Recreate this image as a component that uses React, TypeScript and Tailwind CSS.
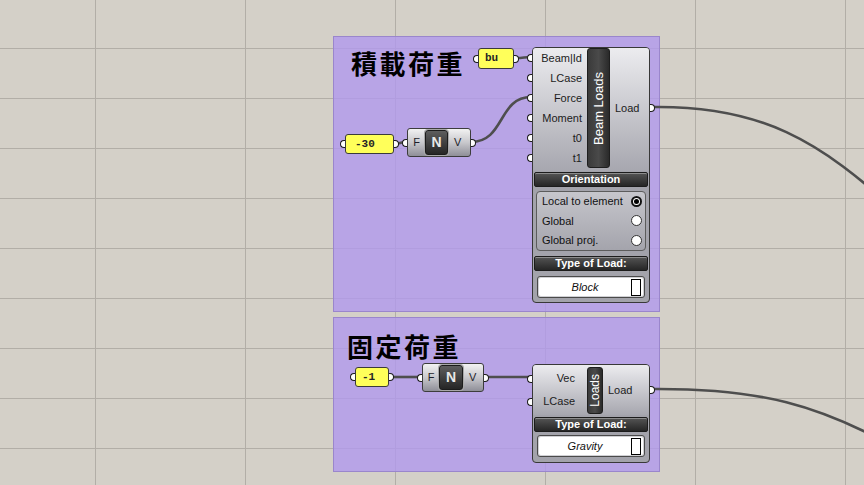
import React from 'react';

const vLines = [95, 245, 395, 545, 695, 845];
const hLines = [48, 98, 148, 198, 248, 298, 348, 398, 448];

function InPort() {
  return (
    <span className="absolute -left-[6px] top-1/2 -translate-y-1/2 w-[5px] h-[8px] rounded-l-full border border-r-0 border-[#1a1a1a] bg-white" />
  );
}

function OutPort() {
  return (
    <span className="absolute -right-[6px] top-1/2 -translate-y-1/2 w-[5px] h-[8px] rounded-r-full border border-l-0 border-[#1a1a1a] bg-white" />
  );
}

function Panel({ text, className }: { text: string; className: string }) {
  return (
    <div
      className={`absolute h-[20px] rounded-[3px] border border-[#3a3a3a] bg-[#ffff5a] flex items-center font-['Liberation_Mono',monospace] font-bold text-[11px] text-[#262626] ${className}`}
    >
      <InPort />
      {text}
      <OutPort />
    </div>
  );
}

function UnitZ({ className, leftW, btnW }: { className: string; leftW: string; btnW: string }) {
  return (
    <div
      className={`absolute h-[29px] rounded-[3px] border border-[#3c3c3c] bg-linear-to-b from-[#f2f2f2] via-[#c8c8cc] to-[#8f8f98] flex items-center text-[11px] text-[#1e1e2a] ${className}`}
    >
      <InPort />
      <span className={`${leftW} text-center`}>F</span>
      <span
        className={`${btnW} h-[25px] rounded-[3px] border border-[#1c1c1c] bg-linear-to-b from-[#5e5e5e] to-[#262626] shadow-[0_0_0_1px_#a8a8a8] flex items-center justify-center text-[#e8e8e8] font-bold text-[14px]`}
      >
        N
      </span>
      <span className="pl-[6px]">V</span>
      <OutPort />
    </div>
  );
}

function Header({ children }: { children: React.ReactNode }) {
  return (
    <div className="h-[15px] rounded-[2px] border border-[#1c1c1c] bg-linear-to-b from-[#555] to-[#262626] shadow-[inset_0_1px_0_#8c8c8c] text-white font-bold text-[11px] leading-[13px] text-center">
      {children}
    </div>
  );
}

function Dropdown({ value }: { value: string }) {
  return (
    <div className="mx-[3px] h-[22px] rounded-[3px] border border-[#4a4a4a] bg-[#d0d0d4] p-[1px] flex">
      <div className="flex-1 rounded-[2px] bg-white flex items-center">
        <span className="flex-1 text-center italic text-[11px] text-[#111]">{value}</span>
        <span className="w-[10px] h-[17px] border border-black bg-white mr-[2px]" />
      </div>
    </div>
  );
}

function Radio({ on }: { on?: boolean }) {
  return (
    <span
      className={`w-[11px] h-[11px] rounded-full bg-white border ${on ? 'border-[2px] border-[#111]' : 'border-[#333]'} flex items-center justify-center`}
    >
      {on && <span className="w-[5px] h-[5px] rounded-full bg-black" />}
    </span>
  );
}

function InputRow({ label, h }: { label: string; h: string }) {
  return (
    <div className={`relative ${h} flex items-center justify-end`}>
      <InPort />
      {label}
    </div>
  );
}

function Group({ className, title, titleClass }: { className: string; title: string; titleClass: string }) {
  return (
    <div className={`absolute border border-[#9a86cc] bg-[#b098eecc] ${className}`}>
      <div
        className={`font-['Noto_Sans_CJK_JP','Noto_Sans_CJK_SC',sans-serif] font-bold text-[26px] leading-none tracking-[2.5px] text-black ${titleClass}`}
      >
        {title}
      </div>
    </div>
  );
}

export default function App() {
  return (
    <div className="relative w-[864px] h-[485px] overflow-hidden bg-[#d4d0c8] font-['Liberation_Sans',Arial,sans-serif] text-[#1c1c1c]">
      <svg className="absolute inset-0" width={864} height={485}>
        {vLines.map((x) => (
          <line key={`v${x}`} x1={x + 0.5} y1={0} x2={x + 0.5} y2={485} stroke="#b2aea7" strokeWidth={1} />
        ))}
        {hLines.map((y) => (
          <line key={`h${y}`} x1={0} y1={y + 0.5} x2={864} y2={y + 0.5} stroke="#b2aea7" strokeWidth={1} />
        ))}
      </svg>

      <Group className="left-[333px] top-[36px] w-[327px] h-[276px]" title="積載荷重" titleClass="pl-[17px] pt-[13px]" />
      <Group className="left-[333px] top-[317px] w-[327px] h-[155px]" title="固定荷重" titleClass="pl-[13px] pt-[15px]" />

      <svg className="absolute inset-0" width={864} height={485} fill="none" stroke="#4e4e4e" strokeWidth={2.6}>
        <path d="M516 58 C524 58 524 57 531 57" />
        <path d="M394 144 C400 144 400 142 406 142" />
        <path d="M471 142 C505 142 498 97 531 97" />
        <path d="M389 377 L421 377" />
        <path d="M484 377 L531 377" />
        <path d="M651 107 C760 105 820 140 900 215" />
        <path d="M651 389 C760 388 820 405 900 450" />
      </svg>

      <Panel text="bu" className="left-[478px] top-[48px] w-[36px] h-[21px] pl-[6px]" />
      <Panel text="-30" className="left-[345px] top-[134px] w-[49px] pl-[9px]" />
      <UnitZ className="left-[407px] top-[128px] w-[64px]" leftW="w-[17px]" btnW="w-[23px]" />

      {/* Beam Loads */}
      <div className="absolute left-[532px] top-[47px] w-[118px] h-[256px] rounded-[4px] border border-[#383838] bg-[#a3a3ab] flex flex-col text-[11px]">
        <div className="h-[123px] rounded-t-[3px] bg-linear-to-b from-[#ececef] to-[#a7a7af] flex">
          <div className="w-[49px] flex flex-col">
            {['Beam|Id', 'LCase', 'Force', 'Moment', 't0', 't1'].map((l) => (
              <InputRow key={l} label={l} h="h-[20px]" />
            ))}
          </div>
          <div className="ml-[5px] w-[23px] h-[120px] rounded-[3px] border border-[#1e1e1e] bg-linear-to-r from-[#3a3a3a] via-[#4a4a4a] to-[#2a2a2a] flex items-center justify-center">
            <span className="[writing-mode:vertical-rl] rotate-180 text-white text-[13px] leading-none">Beam Loads</span>
          </div>
          <div className="relative flex-1 h-[120px] flex items-center pl-[5px]">
            Load
            <OutPort />
          </div>
        </div>
        <div className="px-[1px] pt-[1px] flex flex-col">
          <Header>Orientation</Header>
          <div className="mx-[2px] mt-[4px] h-[60px] rounded-[4px] border border-[#5c5c5c] bg-linear-to-b from-[#c6c6cc] to-[#a4a4ac] flex flex-col justify-center pl-[5px] pr-[3px] text-[#111]">
            {[
              ['Local to element', true],
              ['Global', false],
              ['Global proj.', false],
            ].map(([l, on]) => (
              <div key={l as string} className="h-[19.5px] flex items-center justify-between">
                <span>{l as string}</span>
                <Radio on={on as boolean} />
              </div>
            ))}
          </div>
          <div className="mt-[5px]">
            <Header>Type of Load:</Header>
          </div>
          <div className="mt-[5px]">
            <Dropdown value="Block" />
          </div>
        </div>
      </div>

      <Panel text="-1" className="left-[355px] top-[367px] w-[34px] pl-[6px]" />
      <UnitZ className="left-[422px] top-[363px] w-[62px]" leftW="w-[16px]" btnW="w-[24px]" />

      {/* Loads */}
      <div className="absolute left-[532px] top-[364px] w-[118px] h-[99px] rounded-[4px] border border-[#383838] bg-[#a3a3ab] flex flex-col text-[11px]">
        <div className="h-[50px] rounded-t-[3px] bg-linear-to-b from-[#ececef] to-[#a7a7af] flex pt-[2px]">
          <div className="w-[42px] flex flex-col">
            <InputRow label="Vec" h="h-[23px]" />
            <InputRow label="LCase" h="h-[23px]" />
          </div>
          <div className="ml-[12px] w-[16px] h-[47px] rounded-[3px] border border-[#1e1e1e] bg-linear-to-r from-[#3a3a3a] via-[#4a4a4a] to-[#2a2a2a] flex items-center justify-center">
            <span className="[writing-mode:vertical-rl] rotate-180 text-white text-[12px] leading-none">Loads</span>
          </div>
          <div className="relative flex-1 h-[46px] flex items-center pl-[5px]">
            Load
            <OutPort />
          </div>
        </div>
        <div className="px-[1px] pt-[2px] flex flex-col">
          <Header>Type of Load:</Header>
          <div className="mt-[3px]">
            <Dropdown value="Gravity" />
          </div>
        </div>
      </div>
    </div>
  );
}
